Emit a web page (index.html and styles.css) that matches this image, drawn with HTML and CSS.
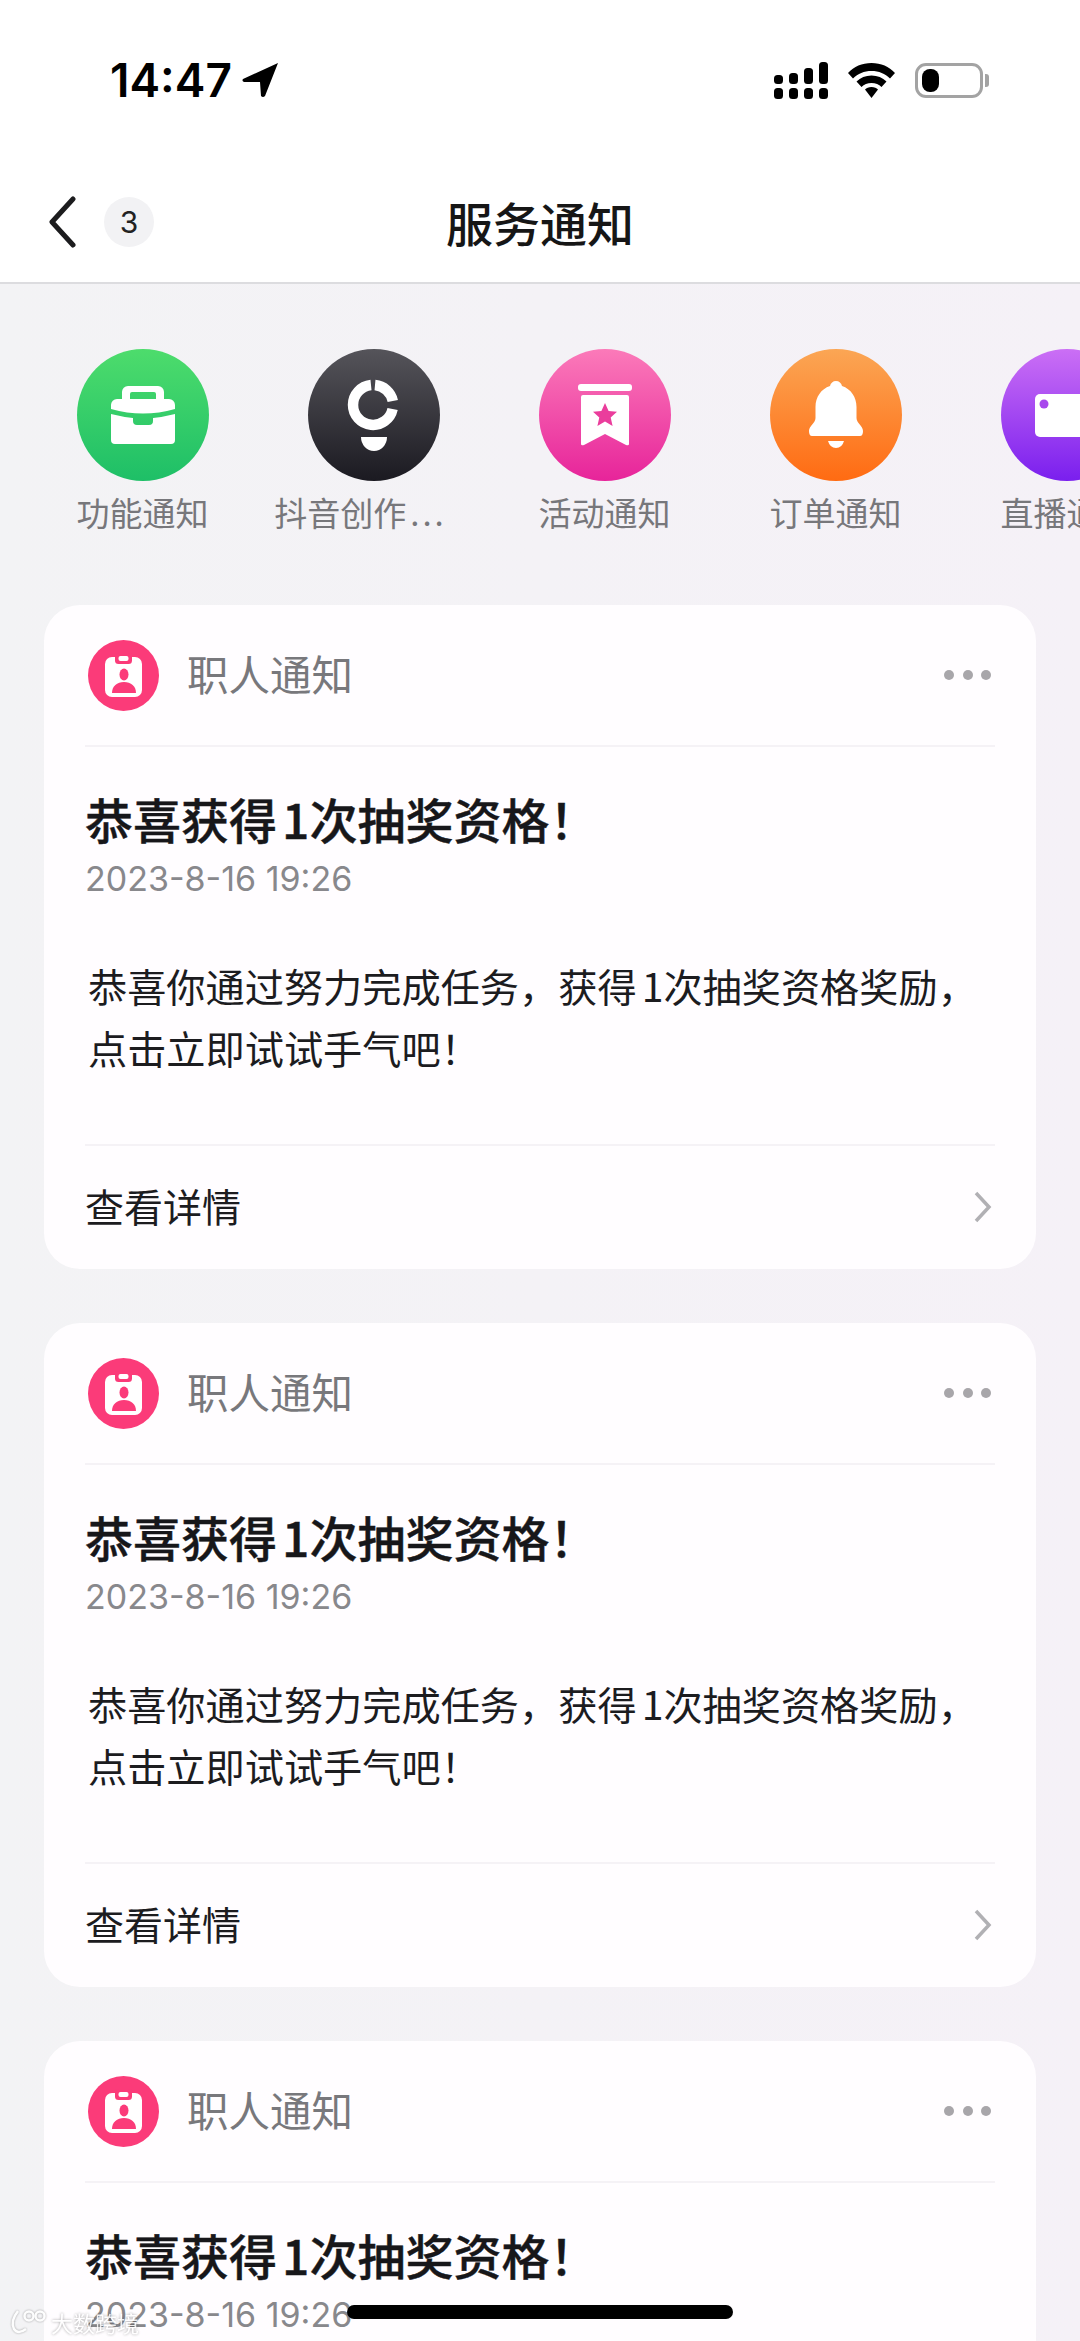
FILE: index.html
```html
<!DOCTYPE html>
<html lang="zh-CN">
<head>
    <meta charset="UTF-8">
    <meta name="viewport" content="width=device-width, initial-scale=1.0">
    <title>服务通知</title>
    <link rel="stylesheet" href="styles.css">
</head>
<body>

    <svg class="defs" width="0" height="0">
        <symbol id="job-icon" viewBox="0 0 71 71">
            <circle cx="35.5" cy="35.5" r="35.5" fill="#fb3b79"/>
            <rect x="17" y="17" width="37" height="40" rx="7" fill="#fff"/>
            <rect x="27" y="13" width="17" height="11" rx="3.5" fill="#fb3b79"/>
            <rect x="30.5" y="16" width="10" height="5" rx="2" fill="#fff"/>
            <ellipse cx="36" cy="34.5" rx="4.5" ry="6" fill="#fb3b79"/>
            <path d="M24 53c0-7 5-11 12-11s12 4 12 11z" fill="#fb3b79"/>
        </symbol>
    </svg>

    <header class="top">
        <div class="status">
            <div class="clock">
                <span>14:47</span>
                <svg width="38" height="36" viewBox="0 0 38 36"><path d="M36 1 L1 17 Q-.5 19 2 20 L18 20 L19 34 Q21 36 23 34 Z" fill="#000"/></svg>
            </div>
            <div class="status-icons">
                <svg width="54" height="37" viewBox="0 0 54 37" fill="#000">
                    <rect x="0" y="13" width="9" height="9" rx="3.5"/><rect x="15" y="11" width="9" height="11" rx="3.5"/>
                    <rect x="30" y="6" width="9" height="16" rx="3.5"/><rect x="45" y="0" width="9" height="22" rx="3.5"/>
                    <rect x="0" y="26" width="9" height="11" rx="3.5"/><rect x="15" y="26" width="9" height="11" rx="3.5"/>
                    <rect x="30" y="26" width="9" height="11" rx="3.5"/><rect x="45" y="26" width="9" height="11" rx="3.5"/>
                </svg>
                <svg width="47" height="35" viewBox="0 0 47 35" fill="#000">
                    <path d="M23.5 0C14 0 6 3.500 0 10l5 5.500C10 10.500 16 8 23.500 8S37 10.500 42 15.500L47 10C41 3.500 33 0 23.500 0z"/>
                    <path d="M23.500 12.500c-6 0-11 2-15 6l5 5.500c2.500-2.500 6-4 10-4s7.500 1.500 10 4l5-5.500c-4-4-9-6-15-6z"/>
                    <path d="M23.500 24c-3 0-5 1-6.500 2.500L23.500 35 30 26.500C28.500 25 26.500 24 23.500 24z"/>
                </svg>
                <div class="battery"><i></i></div>
            </div>
        </div>
        <nav class="nav">
            <div class="nav-left">
                <svg width="30" height="52" viewBox="0 0 30 52"><path d="M26 3 L5 26 L26 49" fill="none" stroke="#1c1c1e" stroke-width="5" stroke-linecap="round" stroke-linejoin="round"/></svg>
                <span class="count">3</span>
            </div>
            <h1>服务通知</h1>
        </nav>
    </header>

    <section class="channels">
        <div class="channel">
            <div class="bubble green">
                <svg viewBox="0 0 132 132" fill="#fff">
                    <path fill-rule="evenodd" d="M45 50V43a6 6 0 0 1 6-6h30a6 6 0 0 1 6 6v7h5a6 6 0 0 1 6 6v4q-32 9-64 0v-4a6 6 0 0 1 6-6zm8 0h26v-5a2 2 0 0 0-2-2H55a2 2 0 0 0-2 2z"/>
                    <path d="M34 65q12 3 22 4v3q0 4 4 4h12q4 0 4-4v-3q10-1 22-4v26a4 4 0 0 1-4 4H38a4 4 0 0 1-4-4z"/>
                </svg>
            </div>
            <span>功能通知</span>
        </div>
        <div class="channel">
            <div class="bubble dark">
                <svg viewBox="0 0 132 132" fill="none" stroke="#fff" stroke-width="10.500">
                    <path d="M63 36A20 20 0 1 0 84.600 60"/>
                    <path d="M67 36.100A20 20 0 0 1 84.800 52"/>
                    <path d="M53 88h26a13 14 0 0 1-26 0z" fill="#fff" stroke="none"/>
                </svg>
            </div>
            <span class="cut">抖音创作<b>...</b></span>
        </div>
        <div class="channel">
            <div class="bubble pink">
                <svg viewBox="0 0 132 132" fill="#fff">
                    <rect x="39" y="35" width="54" height="7" rx="3"/>
                    <path d="M42 48a2 2 0 0 1 2-2h44a2 2 0 0 1 2 2v47q0 2-3 1L66 85 45 96q-3 1-3-1z"/>
                    <path d="M66 54l3.600 8 8.400.8-6.300 5.700 1.900 8.500L66 72.500 58.400 77l1.900-8.500L54 62.800l8.400-.8z" fill="#ea3d9c"/>
                </svg>
            </div>
            <span>活动通知</span>
        </div>
        <div class="channel">
            <div class="bubble orange">
                <svg viewBox="0 0 132 132" fill="#fff">
                    <path d="M66 32c3 0 5.500 2 6 5 9 3 14.500 11 14.500 21v11c0 5 6.500 8 6.500 13q0 5-3 5H42q-3 0-3-5c0-5 6.500-8 6.500-13V58c0-10 5.500-18 14.500-21 .5-3 3-5 6-5z"/>
                    <path d="M58 92h16q-2 7-8 7t-8-7z"/>
                </svg>
            </div>
            <span>订单通知</span>
        </div>
        <div class="channel">
            <div class="bubble purple">
                <svg viewBox="0 0 132 132">
                    <rect x="34" y="45" width="64" height="43" rx="5" fill="#fff"/>
                    <circle cx="43" cy="55" r="4.500" fill="#a848ec"/>
                </svg>
            </div>
            <span>直播通知</span>
        </div>
    </section>

    <main class="feed">
        <article class="card">
            <div class="card-head">
                <svg class="job-icon" width="71" height="71"><use href="#job-icon"/></svg>
                <span class="card-from">职人通知</span>
                <div class="more"><i></i><i></i><i></i></div>
            </div>
            <div class="card-body">
                <h2>恭喜获得<span class="num">1</span>次抽奖资格！</h2>
                <p class="date">2023-8-16 19:26</p>
                <p class="text">恭喜你通过努力完成任务，获得<span class="num">1</span>次抽奖资格奖励，<br>点击立即试试手气吧！</p>
            </div>
            <div class="card-foot">
                <span>查看详情</span>
                <svg width="20" height="34" viewBox="0 0 20 34"><path d="M3 3 L16 17 L3 31" fill="none" stroke="#b1b0b4" stroke-width="3.500"/></svg>
            </div>
        </article>

        <article class="card">
            <div class="card-head">
                <svg class="job-icon" width="71" height="71"><use href="#job-icon"/></svg>
                <span class="card-from">职人通知</span>
                <div class="more"><i></i><i></i><i></i></div>
            </div>
            <div class="card-body">
                <h2>恭喜获得<span class="num">1</span>次抽奖资格！</h2>
                <p class="date">2023-8-16 19:26</p>
                <p class="text">恭喜你通过努力完成任务，获得<span class="num">1</span>次抽奖资格奖励，<br>点击立即试试手气吧！</p>
            </div>
            <div class="card-foot">
                <span>查看详情</span>
                <svg width="20" height="34" viewBox="0 0 20 34"><path d="M3 3 L16 17 L3 31" fill="none" stroke="#b1b0b4" stroke-width="3.500"/></svg>
            </div>
        </article>

        <article class="card">
            <div class="card-head">
                <svg class="job-icon" width="71" height="71"><use href="#job-icon"/></svg>
                <span class="card-from">职人通知</span>
                <div class="more"><i></i><i></i><i></i></div>
            </div>
            <div class="card-body">
                <h2>恭喜获得<span class="num">1</span>次抽奖资格！</h2>
                <p class="date">2023-8-16 19:26</p>
            </div>
        </article>
    </main>

    <div class="watermark">
        <svg width="40" height="26" viewBox="0 0 40 26" fill="none" stroke="#fff" stroke-width="2.500"><path d="M10 2 Q2 12 6 20 Q10 26 18 20"/><circle cx="21" cy="7" r="4.500"/><circle cx="32" cy="7" r="4.500"/></svg>
        <span>大数跨境</span>
    </div>
    <div class="home-bar"></div>

</body>
</html>
```

FILE: styles.css
```css
* {
    box-sizing: border-box;
}
html, body {
    margin: 0;
    height: 2341px;
    overflow: hidden;
}
body {
    position: relative;
    font-family: "Noto Sans CJK SC", "Noto Sans", sans-serif;
    background: linear-gradient(90deg, #f3f3f5, #f5f1f7);
    color: #161823;
}
.defs {
    position: absolute;
}

/* top area */
.top {
    height: 284px;
    background: #fff;
    border-bottom: 2px solid #dcdcdf;
}
.status {
    height: 162px;
    padding: 62px 97px 0 110px;
    display: flex;
    justify-content: space-between;
    align-items: flex-start;
}
.clock {
    display: flex;
    align-items: center;
    gap: 10px;
    height: 36px;
    font-family: Inter, sans-serif;
    font-size: 46px;
    font-weight: 600;
    color: #000;
}
.status-icons {
    display: flex;
    align-items: center;
    gap: 20px;
}
.battery {
    position: relative;
    width: 68px;
    height: 35px;
    border: 3px solid #a3a3a3;
    border-radius: 11px;
    padding: 3px 4px;
}
.battery i {
    display: block;
    width: 17px;
    height: 100%;
    background: #000;
    border-radius: 8px;
}
.battery::after {
    content: "";
    position: absolute;
    right: -9px;
    top: 8px;
    width: 4px;
    height: 13px;
    background: #a3a3a3;
    border-radius: 0 3px 3px 0;
}
.nav {
    height: 120px;
    padding-bottom: 2px;
    position: relative;
    display: flex;
    align-items: center;
    justify-content: center;
}
.nav-left {
    position: absolute;
    left: 47px;
    top: 34px;
    display: flex;
    align-items: center;
    gap: 27px;
}
.count {
    width: 50px;
    height: 50px;
    border-radius: 50%;
    background: #f2f2f4;
    font-family: Inter, sans-serif;
    font-size: 30px;
    display: flex;
    align-items: center;
    justify-content: center;
    color: #222;
}
h1 {
    margin: 0;
    font-size: 47px;
    font-weight: 500;
    color: #161616;
    line-height: 1;
}

/* channel strip */
.channels {
    height: 321px;
    padding: 65px 0 0 27px;
    display: flex;
    overflow: hidden;
}
.channel {
    flex: 0 0 231px;
    display: flex;
    flex-direction: column;
    align-items: center;
    font-size: 33px;
    color: #77777b;
    white-space: nowrap;
}
.channel span {
    margin-top: 8px;
    line-height: 46px;
}
.channel .cut {
    margin-right: 26px;
}
.channel b {
    font-weight: 400;
    letter-spacing: 3px;
    margin-left: 4px;
}
.bubble {
    width: 132px;
    height: 132px;
    border-radius: 50%;
}
.bubble svg {
    display: block;
    width: 132px;
    height: 132px;
}
.green { background: linear-gradient(#4ddc6c, #1ebf67); }
.dark { background: linear-gradient(#55545a, #1b1a21); }
.pink { background: linear-gradient(#fb7ab9, #e7249a); }
.orange { background: linear-gradient(#fba654, #ff6b12); }
.purple { background: linear-gradient(#cb6ff5, #7a1fee); }

/* notification cards */
.feed {
    height: 1736px;
    padding: 0 44px;
    overflow: hidden;
}
.card {
    background: #fffdff;
    border-radius: 36px;
    padding: 0 41px;
    margin-bottom: 54px;
    height: 664px;
}
.card-head {
    height: 142px;
    display: flex;
    align-items: center;
    border-bottom: 2px solid #f5f2f6;
}
.job-icon {
    margin-left: 3px;
    flex: none;
}
.card-from {
    margin: 0 0 5px 28px;
    font-size: 41.5px;
    color: #78787c;
}
.more {
    margin-left: auto;
    margin-right: 4px;
    display: flex;
    gap: 8.5px;
}
.more i {
    width: 10px;
    height: 10px;
    border-radius: 50%;
    background: #a8a6aa;
}
.card-body {
    height: 399px;
    padding-top: 35px;
    border-bottom: 2px solid #f5f2f6;
}
h2 {
    margin: 0;
    font-size: 48px;
    font-weight: 500;
    line-height: 72px;
    color: #17171a;
    -webkit-text-stroke: .4px #17171a;
}
.num {
    margin-left: 5px;
}
.date {
    margin: 0;
    font-size: 34px;
    line-height: 50px;
    color: #88888c;
    font-family: Inter, sans-serif;
}
.text {
    margin: 50px 0 0 3px;
    font-size: 39.2px;
    line-height: 62px;
    color: #1c1c1f;
}
.card-foot {
    height: 122px;
    padding: 0 2px 5px 0;
    display: flex;
    align-items: center;
    justify-content: space-between;
    font-size: 39px;
    color: #1c1c1f;
}
.card-foot svg {
    margin-top: 5px;
}

/* things over the page */
.home-bar {
    position: absolute;
    left: 347px;
    top: 2305px;
    width: 386px;
    height: 14px;
    border-radius: 7px;
    background: #000;
}
.watermark {
    position: absolute;
    left: 8px;
    top: 2306px;
    display: flex;
    align-items: center;
    gap: 3px;
    font-size: 22px;
    color: #fff;
    opacity: .85;
    text-shadow: 0 0 3px rgba(0, 0, 0, .45);
}
.watermark svg {
    filter: drop-shadow(0 0 1px rgba(0, 0, 0, .4));
}
```
